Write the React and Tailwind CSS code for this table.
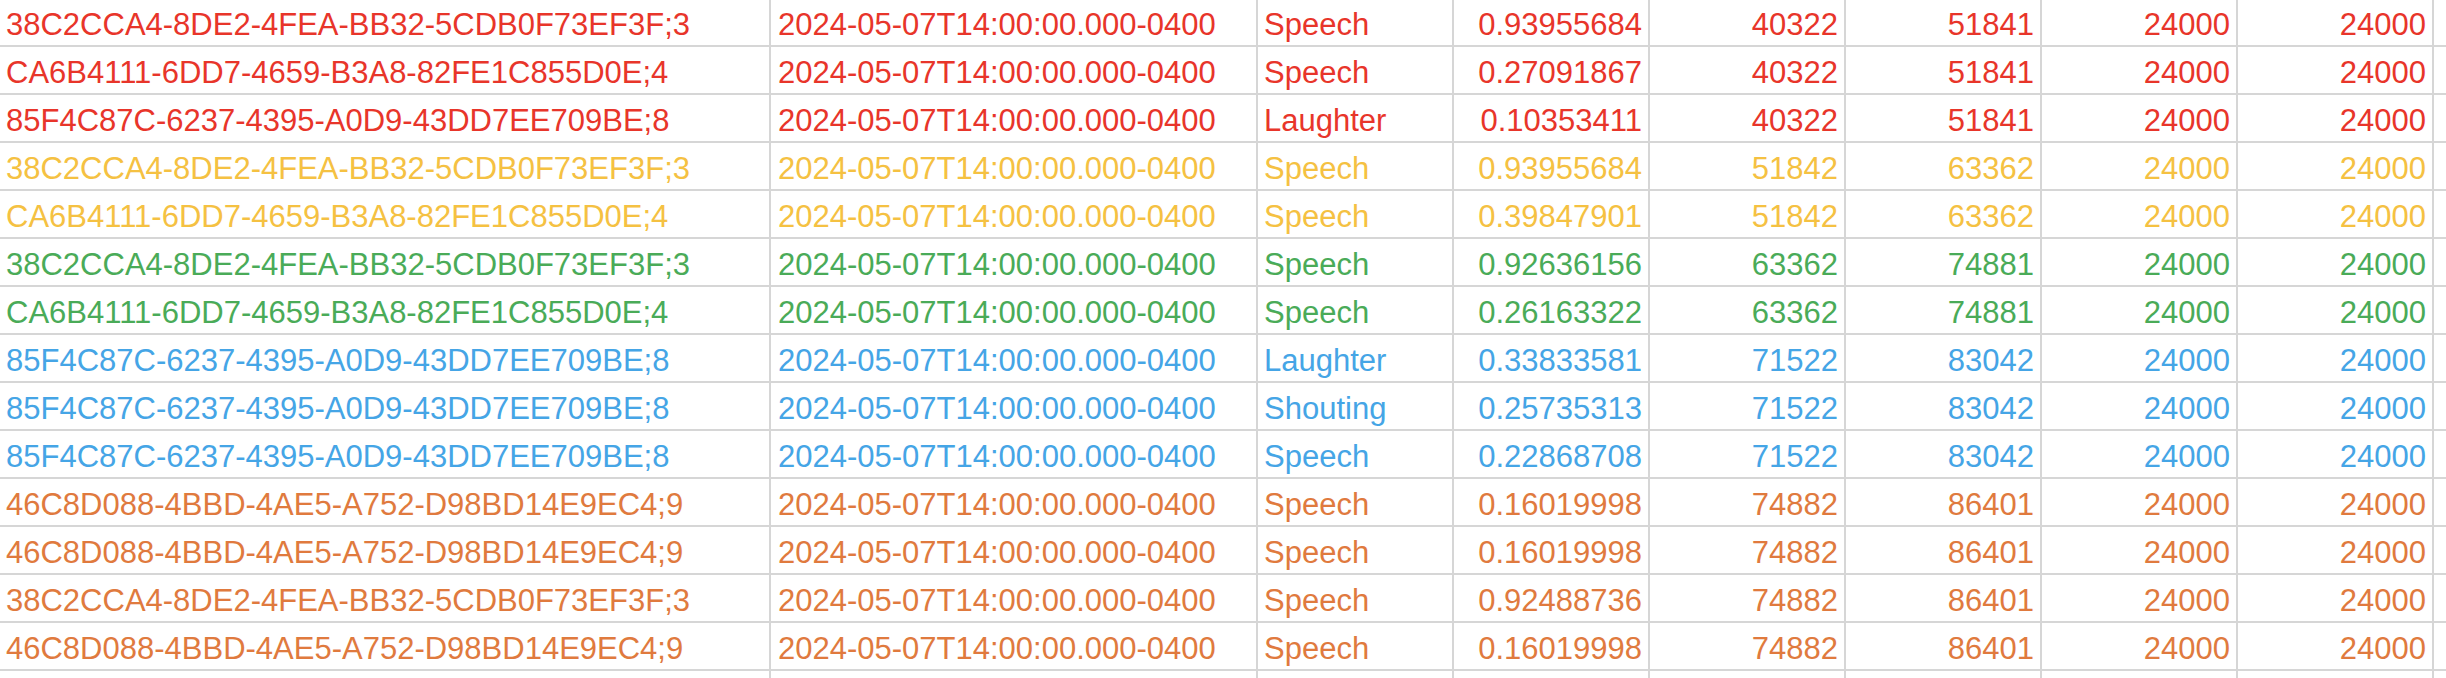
const RED = 'text-[#e8352a]';
const YELLOW = 'text-[#f5c142]';
const GREEN = 'text-[#4aab58]';
const BLUE = 'text-[#45a5e6]';
const ORANGE = 'text-[#e07a3e]';

const ID_A = '38C2CCA4-8DE2-4FEA-BB32-5CDB0F73EF3F;3';
const ID_B = 'CA6B4111-6DD7-4659-B3A8-82FE1C855D0E;4';
const ID_C = '85F4C87C-6237-4395-A0D9-43DD7EE709BE;8';
const ID_D = '46C8D088-4BBD-4AE5-A752-D98BD14E9EC4;9';
const STAMP = '2024-05-07T14:00:00.000-0400';

const rows = [
  [RED, ID_A, 'Speech', '0.93955684', '40322', '51841'],
  [RED, ID_B, 'Speech', '0.27091867', '40322', '51841'],
  [RED, ID_C, 'Laughter', '0.10353411', '40322', '51841'],
  [YELLOW, ID_A, 'Speech', '0.93955684', '51842', '63362'],
  [YELLOW, ID_B, 'Speech', '0.39847901', '51842', '63362'],
  [GREEN, ID_A, 'Speech', '0.92636156', '63362', '74881'],
  [GREEN, ID_B, 'Speech', '0.26163322', '63362', '74881'],
  [BLUE, ID_C, 'Laughter', '0.33833581', '71522', '83042'],
  [BLUE, ID_C, 'Shouting', '0.25735313', '71522', '83042'],
  [BLUE, ID_C, 'Speech', '0.22868708', '71522', '83042'],
  [ORANGE, ID_D, 'Speech', '0.16019998', '74882', '86401'],
  [ORANGE, ID_D, 'Speech', '0.16019998', '74882', '86401'],
  [ORANGE, ID_A, 'Speech', '0.92488736', '74882', '86401'],
  [ORANGE, ID_D, 'Speech', '0.16019998', '74882', '86401'],
];

const cell = 'flex items-end h-full border-r-2 border-[#d6d6d6] pb-[5px] leading-none whitespace-nowrap overflow-hidden';

const Row = ({ color, id, label, score, start, end }) => (
  <div className={`flex h-[48px] border-b-2 border-[#d6d6d6] ${color}`}>
    <div className={`${cell} w-[771px] shrink-0 pl-[6px]`}>{id}</div>
    <div className={`${cell} w-[487px] shrink-0 pl-[7px]`}>{STAMP}</div>
    <div className={`${cell} w-[196px] shrink-0 pl-[6px]`}>{label}</div>
    <div className={`${cell} w-[196px] shrink-0 justify-end pr-[6px]`}>{score}</div>
    <div className={`${cell} w-[196px] shrink-0 justify-end pr-[6px]`}>{start}</div>
    <div className={`${cell} w-[196px] shrink-0 justify-end pr-[6px]`}>{end}</div>
    <div className={`${cell} w-[196px] shrink-0 justify-end pr-[6px]`}>24000</div>
    <div className={`${cell} w-[196px] shrink-0 justify-end pr-[6px]`}>24000</div>
    <div className="flex-1" />
  </div>
);

const App = () => {
  return (
    <div className="h-[678px] w-[2446px] overflow-hidden bg-white font-['Liberation_Sans',Arial,sans-serif] text-[31px]">
      <div className="-mt-px">
        {rows.map(([color, id, label, score, start, end], i) => (
          <Row key={i} color={color} id={id} label={label} score={score} start={start} end={end} />
        ))}
        <div className="flex h-[48px]">
          <div className="h-full w-[771px] shrink-0 border-r-2 border-[#d6d6d6]" />
          <div className="h-full w-[487px] shrink-0 border-r-2 border-[#d6d6d6]" />
          <div className="h-full w-[196px] shrink-0 border-r-2 border-[#d6d6d6]" />
          <div className="h-full w-[196px] shrink-0 border-r-2 border-[#d6d6d6]" />
          <div className="h-full w-[196px] shrink-0 border-r-2 border-[#d6d6d6]" />
          <div className="h-full w-[196px] shrink-0 border-r-2 border-[#d6d6d6]" />
          <div className="h-full w-[196px] shrink-0 border-r-2 border-[#d6d6d6]" />
          <div className="h-full w-[196px] shrink-0 border-r-2 border-[#d6d6d6]" />
        </div>
      </div>
    </div>
  );
};

export default App;
